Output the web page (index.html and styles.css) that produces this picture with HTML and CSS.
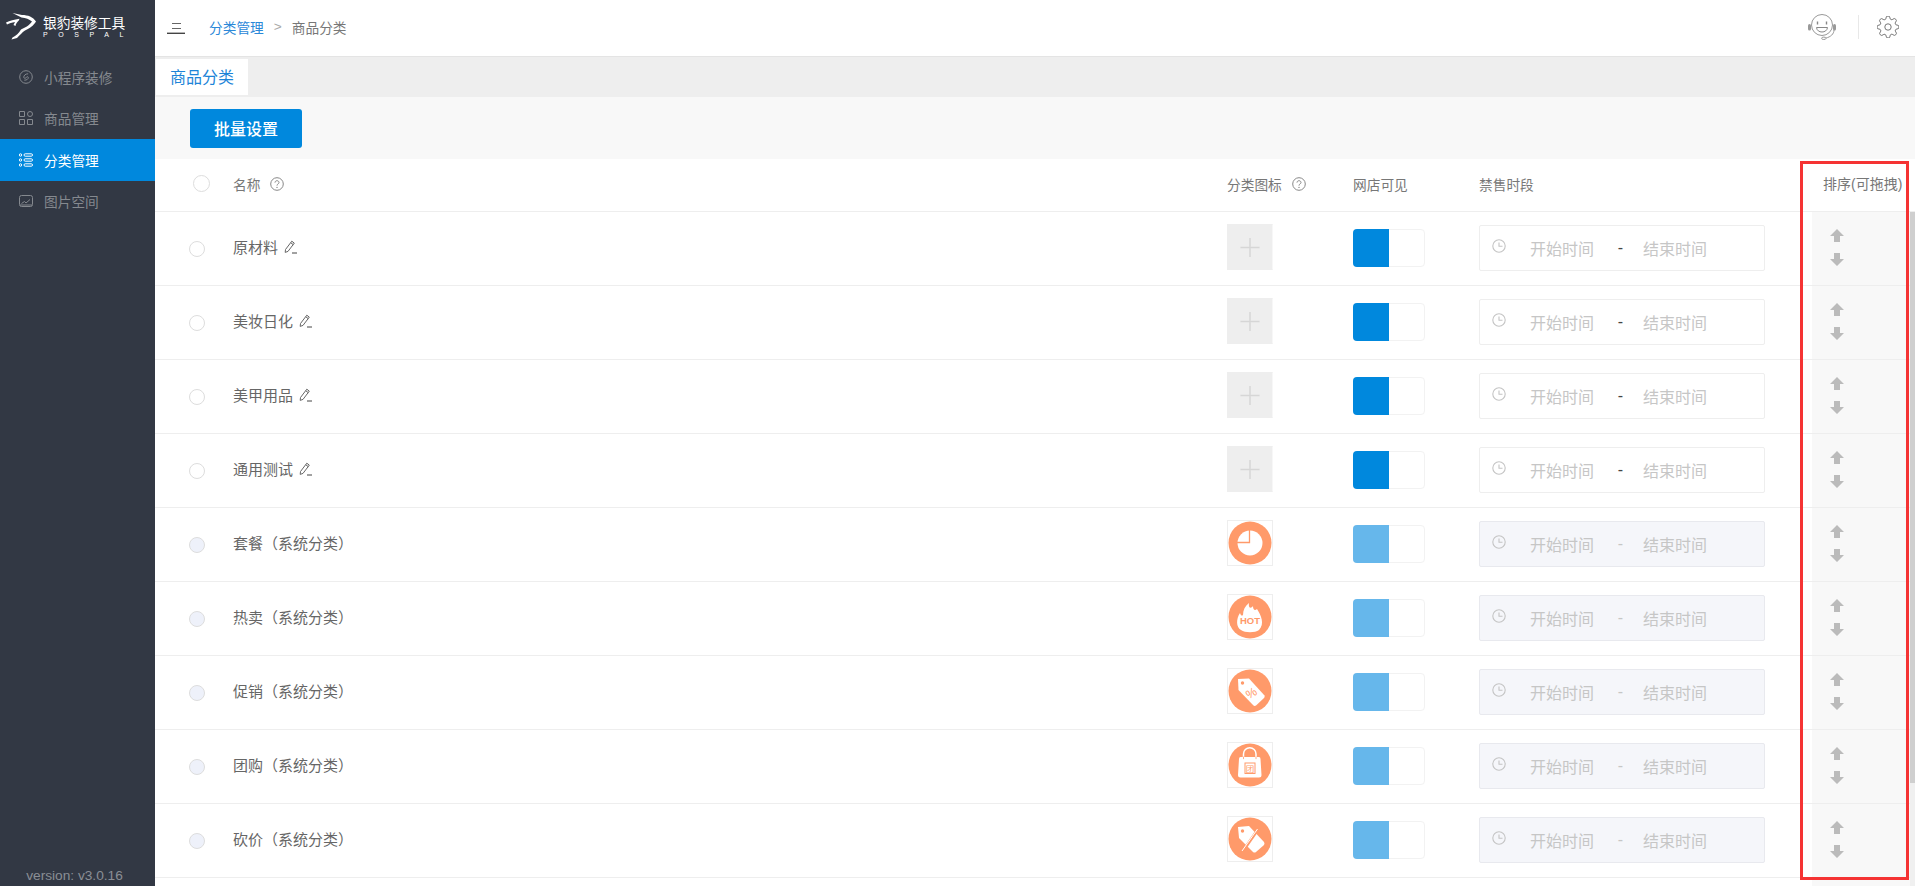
FILE: index.html
```html
<!DOCTYPE html>
<html lang="zh-CN">
<head>
<meta charset="utf-8">
<title>商品分类</title>
<link rel="stylesheet" href="styles.css">
</head>
<body>
<svg class="defs" xmlns="http://www.w3.org/2000/svg">
  <symbol id="i-q" viewBox="0 0 14 14"><circle cx="7" cy="7" r="6.300" fill="none" stroke="#888" stroke-width="1"/><path d="M5 5.600C5 4.500 5.900 3.700 7 3.700s2 .8 2 1.800C9 6.900 7 6.900 7 8.600" fill="none" stroke="#888" stroke-width="1"/><circle cx="7" cy="10.400" r=".7" fill="#888"/></symbol>
  <symbol id="i-pen" viewBox="0 0 13 14"><path d="M1.500 9.500 7.800 1.200l2.500 1.900-6.300 8.300-2.800 1z M6.800 2.800l2.500 1.900" fill="none" stroke="#666" stroke-width="1"/><path d="M8 13h5" stroke="#444" stroke-width="1"/></symbol>
  <symbol id="i-clock" viewBox="0 0 14 14"><circle cx="7" cy="7" r="6.200" fill="none" stroke="#c4c4c4" stroke-width="1.100"/><path d="M7 3.500V7.300H10.500" fill="none" stroke="#c4c4c4" stroke-width="1.100"/></symbol>
  <symbol id="i-up" viewBox="0 0 14 13"><path d="M7 0l7 7h-4v6H4V7H0z" fill="#bbb"/></symbol>
  <symbol id="i-down" viewBox="0 0 14 13"><path d="M7 13l7-7h-4V0H4v6H0z" fill="#bbb"/></symbol>
  <symbol id="i-plus" viewBox="0 0 46 46"><path d="M23 13.500v20M13 23.500h20" stroke="#d6d6d6" stroke-width="1.500" fill="none"/></symbol>
</svg>

<div class="app">
  <aside class="sidebar">
    <div class="logo">
      <svg class="logo-mark" viewBox="0 0 37 36" width="37" height="36"><path d="M12.500 5 22 7C28 7 33 9 36 13.500L35 15C32 19 28 21 25 22.500 22 24.500 20 27 17 30L11.500 31.500 12.500 29.500C16 28 19 25 21 21.500 25 19.500 29 18 32 13.500 29 11 26 10 21.500 9.500Z" fill="#fff"/><path d="M6 14.500C10 12.500 14 12 19.500 10.800L18.800 12.500C17 14 16 15.500 15.500 18L13.500 17 15 14C12 14.500 9 15.500 7 16.500Z" fill="#fff"/></svg>
      <div class="logo-text">
        <div class="logo-title">银豹装修工具</div>
        <div class="logo-sub">POSPAL</div>
      </div>
    </div>
    <nav class="menu">
      <a class="menu-item">
        <svg class="menu-icon" viewBox="0 0 14 14"><circle cx="7" cy="7" r="6.300" fill="none" stroke="currentColor"/><path d="M9.200 3.800C6.500 3.800 4.500 5.500 4.800 7.500c.2 1 2 1.200 2.400 0 .3-1 2-1.100 2.100 0 .1 1.500-1.500 2.700-4 2.700" fill="none" stroke="currentColor"/></svg>
        <span>小程序装修</span>
      </a>
      <a class="menu-item">
        <svg class="menu-icon" viewBox="0 0 14 14"><path d="M.5.500h5v5h-5zM.5 8.500h5v5h-5zM8.500 8.500h5v5h-5z" fill="none" stroke="currentColor"/><circle cx="11" cy="3" r="2.500" fill="none" stroke="currentColor"/></svg>
        <span>商品管理</span>
      </a>
      <a class="menu-item is-active">
        <svg class="menu-icon" viewBox="0 0 14 14"><g fill="none" stroke="currentColor"><circle cx="1.500" cy="2" r="1.200"/><circle cx="1.500" cy="7" r="1.200"/><circle cx="1.500" cy="12" r="1.200"/><rect x="5" y=".8" width="8.500" height="2.400" rx="1.200"/><rect x="5" y="5.800" width="8.500" height="2.400" rx="1.200"/><rect x="5" y="10.800" width="8.500" height="2.400" rx="1.200"/></g></svg>
        <span>分类管理</span>
      </a>
      <a class="menu-item">
        <svg class="menu-icon" viewBox="0 0 14 14"><rect x=".5" y="1.500" width="13" height="11" rx="2" fill="none" stroke="currentColor"/><path d="M2.500 9.500 5.500 7.500 7 9l4-3.500M1 11h12" fill="none" stroke="currentColor"/></svg>
        <span>图片空间</span>
      </a>
    </nav>
    <div class="version">version: v3.0.16</div>
  </aside>

  <main class="main">
    <header class="topbar">
      <svg class="fold" viewBox="0 0 18 11" width="18" height="11"><path d="M5 .5h9M5 5.500h9" stroke="#666" fill="none"/><path d="M0 10.300h18" stroke="#444" stroke-width="1.400" fill="none"/></svg>
      <div class="crumbs">
        <a class="crumb-link">分类管理</a>
        <span class="crumb-sep">&gt;</span>
        <span class="crumb-now">商品分类</span>
      </div>
      <div class="top-actions">
        <svg class="headset" viewBox="0 0 28 26" width="28" height="26"><circle cx="14" cy="11" r="10.500" fill="none" stroke="#999"/><path d="M26 16C26 20 22.500 23 18 24" fill="none" stroke="#999"/><ellipse cx="15.800" cy="24.300" rx="2.200" ry="1.200" fill="none" stroke="#999"/><rect x="0" y="10" width="3" height="6.500" rx="1.500" fill="#999"/><rect x="25" y="10" width="3" height="6.500" rx="1.500" fill="#999"/><path d="M9.500 7.500v3M18.500 7.500v3" stroke="#888" stroke-width="1.400"/><path d="M8.500 13.500h11c-.3 3-2.800 4.500-5.500 4.500s-5.200-1.500-5.500-4.500z" fill="none" stroke="#888"/></svg>
        <span class="top-divider"></span>
        <svg class="gear" viewBox="1 1 22 22" width="22" height="22"><circle cx="12" cy="12" r="3.200" fill="none" stroke="#777" stroke-width="1"/><path d="M19.400 15a1.650 1.650 0 0 0 .33 1.820l.06.06a2 2 0 0 1 0 2.830 2 2 0 0 1-2.830 0l-.06-.06a1.650 1.650 0 0 0-1.820-.33 1.650 1.650 0 0 0-1 1.510V21a2 2 0 0 1-2 2 2 2 0 0 1-2-2v-.09A1.650 1.650 0 0 0 9 19.400a1.650 1.650 0 0 0-1.820.33l-.06.06a2 2 0 0 1-2.830 0 2 2 0 0 1 0-2.830l.06-.06a1.650 1.650 0 0 0 .33-1.820 1.650 1.650 0 0 0-1.510-1H3a2 2 0 0 1-2-2 2 2 0 0 1 2-2h.09A1.650 1.650 0 0 0 4.600 9a1.650 1.650 0 0 0-.33-1.820l-.06-.06a2 2 0 0 1 0-2.830 2 2 0 0 1 2.830 0l.06.06a1.650 1.650 0 0 0 1.820.33H9a1.650 1.650 0 0 0 1-1.510V3a2 2 0 0 1 2-2 2 2 0 0 1 2 2v.09a1.650 1.650 0 0 0 1 1.510 1.650 1.650 0 0 0 1.820-.33l.06-.06a2 2 0 0 1 2.830 0 2 2 0 0 1 0 2.830l-.06.06a1.650 1.650 0 0 0-.33 1.820V9a1.650 1.650 0 0 0 1.510 1H21a2 2 0 0 1 2 2 2 2 0 0 1-2 2h-.09a1.650 1.650 0 0 0-1.510 1z" fill="none" stroke="#777" stroke-width="1"/></svg>
      </div>
    </header>

    <div class="tabs"><div class="tab">商品分类</div></div>
    <div class="toolbar"><button class="btn-primary" type="button">批量设置</button></div>

    <section class="table">
      <div class="cols table-head">
        <div class="cell-name"><span class="radio radio-head"></span><span>名称</span><svg class="q"><use href="#i-q"/></svg></div>
        <div class="cell-head"><span>分类图标</span><svg class="q"><use href="#i-q"/></svg></div>
        <div>网店可见</div>
        <div>禁售时段</div>
        <div class="head-sort">排序<span class="paren">(</span>可拖拽<span class="paren">)</span></div>
      </div>

      <div class="table-body">
        <div class="rows">
          <div class="cols row">
            <div class="cell-name"><span class="radio"></span><span class="name">原材料</span><svg class="pen"><use href="#i-pen"/></svg></div>
            <div><div class="pic pic-empty"><svg class="plus"><use href="#i-plus"/></svg></div></div>
            <div><div class="switch"><span class="switch-on"></span></div></div>
            <div><div class="time"><svg class="clock"><use href="#i-clock"/></svg><span>开始时间</span><span class="dash">-</span><span>结束时间</span></div></div>
            <div class="sort"><svg class="arrow"><use href="#i-up"/></svg><svg class="arrow"><use href="#i-down"/></svg></div>
          </div>
          <div class="cols row">
            <div class="cell-name"><span class="radio"></span><span class="name">美妆日化</span><svg class="pen"><use href="#i-pen"/></svg></div>
            <div><div class="pic pic-empty"><svg class="plus"><use href="#i-plus"/></svg></div></div>
            <div><div class="switch"><span class="switch-on"></span></div></div>
            <div><div class="time"><svg class="clock"><use href="#i-clock"/></svg><span>开始时间</span><span class="dash">-</span><span>结束时间</span></div></div>
            <div class="sort"><svg class="arrow"><use href="#i-up"/></svg><svg class="arrow"><use href="#i-down"/></svg></div>
          </div>
          <div class="cols row">
            <div class="cell-name"><span class="radio"></span><span class="name">美甲用品</span><svg class="pen"><use href="#i-pen"/></svg></div>
            <div><div class="pic pic-empty"><svg class="plus"><use href="#i-plus"/></svg></div></div>
            <div><div class="switch"><span class="switch-on"></span></div></div>
            <div><div class="time"><svg class="clock"><use href="#i-clock"/></svg><span>开始时间</span><span class="dash">-</span><span>结束时间</span></div></div>
            <div class="sort"><svg class="arrow"><use href="#i-up"/></svg><svg class="arrow"><use href="#i-down"/></svg></div>
          </div>
          <div class="cols row">
            <div class="cell-name"><span class="radio"></span><span class="name">通用测试</span><svg class="pen"><use href="#i-pen"/></svg></div>
            <div><div class="pic pic-empty"><svg class="plus"><use href="#i-plus"/></svg></div></div>
            <div><div class="switch"><span class="switch-on"></span></div></div>
            <div><div class="time"><svg class="clock"><use href="#i-clock"/></svg><span>开始时间</span><span class="dash">-</span><span>结束时间</span></div></div>
            <div class="sort"><svg class="arrow"><use href="#i-up"/></svg><svg class="arrow"><use href="#i-down"/></svg></div>
          </div>

          <div class="cols row is-system">
            <div class="cell-name"><span class="radio"></span><span class="name">套餐（系统分类）</span></div>
            <div><div class="pic"><svg class="badge" viewBox="0 0 44 44"><circle cx="22" cy="22" r="21.500" fill="#ff9a6a"/><circle cx="22" cy="22" r="12.500" fill="#fff"/><path d="M21.500 8v13.500H8" fill="none" stroke="#ff9a6a" stroke-width="1.300"/></svg></div></div>
            <div><div class="switch"><span class="switch-on"></span></div></div>
            <div><div class="time"><svg class="clock"><use href="#i-clock"/></svg><span>开始时间</span><span class="dash">-</span><span>结束时间</span></div></div>
            <div class="sort"><svg class="arrow"><use href="#i-up"/></svg><svg class="arrow"><use href="#i-down"/></svg></div>
          </div>
          <div class="cols row is-system">
            <div class="cell-name"><span class="radio"></span><span class="name">热卖（系统分类）</span></div>
            <div><div class="pic"><svg class="badge" viewBox="0 0 44 44"><circle cx="22" cy="22" r="21.500" fill="#ff9a6a"/><path d="M13 35C8 32 8 24 12 18 13 21 14 21 15 20 15 15 17 11 21 8 20 13 23 14 25 11 25 15 27 16 29 14 33 20 37 29 31 35 27 38 17 38 13 35Z" fill="#fff"/><text class="badge-hot" x="22" y="29" text-anchor="middle">HOT</text></svg></div></div>
            <div><div class="switch"><span class="switch-on"></span></div></div>
            <div><div class="time"><svg class="clock"><use href="#i-clock"/></svg><span>开始时间</span><span class="dash">-</span><span>结束时间</span></div></div>
            <div class="sort"><svg class="arrow"><use href="#i-up"/></svg><svg class="arrow"><use href="#i-down"/></svg></div>
          </div>
          <div class="cols row is-system">
            <div class="cell-name"><span class="radio"></span><span class="name">促销（系统分类）</span></div>
            <div><div class="pic"><svg class="badge" viewBox="0 0 44 44"><circle cx="22" cy="22" r="21.500" fill="#ff9a6a"/><path d="M10 10 21 9.500 36.500 26.500Q37 28 36 29L28 36.500Q26.500 37.500 25 36L10.500 21Z" fill="#fff"/><circle cx="14.500" cy="14" r="1.700" fill="#ff9a6a"/><text class="badge-pct" x="23.500" y="28" text-anchor="middle" transform="rotate(-30 23.500 24)">%</text></svg></div></div>
            <div><div class="switch"><span class="switch-on"></span></div></div>
            <div><div class="time"><svg class="clock"><use href="#i-clock"/></svg><span>开始时间</span><span class="dash">-</span><span>结束时间</span></div></div>
            <div class="sort"><svg class="arrow"><use href="#i-up"/></svg><svg class="arrow"><use href="#i-down"/></svg></div>
          </div>
          <div class="cols row is-system">
            <div class="cell-name"><span class="radio"></span><span class="name">团购（系统分类）</span></div>
            <div><div class="pic"><svg class="badge" viewBox="0 0 44 44"><circle cx="22" cy="22" r="21.500" fill="#ff9a6a"/><path d="M12.500 14H31Q32.500 14 32.500 16L33.500 32Q33.500 34.500 31 34.500H12.500Q10 34.500 10 32L11 16Q11 14 12.500 14Z" fill="#fff"/><path d="M15.500 16.500V11A6.200 6.200 0 0 1 28 11V16.500" fill="none" stroke="#fff" stroke-width="1.500"/><path d="M15.500 13.600v2.500M28 13.600v2.500" stroke="#ff9a6a" stroke-width=".8"/><rect x="17" y="20" width="10" height="10.500" fill="none" stroke="#ff9a6a" stroke-width="1"/><text class="badge-tuan" x="22" y="28.500" text-anchor="middle">团</text></svg></div></div>
            <div><div class="switch"><span class="switch-on"></span></div></div>
            <div><div class="time"><svg class="clock"><use href="#i-clock"/></svg><span>开始时间</span><span class="dash">-</span><span>结束时间</span></div></div>
            <div class="sort"><svg class="arrow"><use href="#i-up"/></svg><svg class="arrow"><use href="#i-down"/></svg></div>
          </div>
          <div class="cols row is-system">
            <div class="cell-name"><span class="radio"></span><span class="name">砍价（系统分类）</span></div>
            <div><div class="pic"><svg class="badge" viewBox="0 0 44 44"><circle cx="22" cy="22" r="21.500" fill="#ff9a6a"/><path d="M10 10 21 9 36 25Q37 26.500 36 28L28 35Q26.500 36 25 35L11 21Z" fill="#fff"/><circle cx="14.500" cy="14" r="1.700" fill="#ff9a6a"/><path d="M31 11 15 34" stroke="#ff9a6a" stroke-width="3"/><path d="M29.500 12 14 34" stroke="#fff" stroke-width="1"/></svg></div></div>
            <div><div class="switch"><span class="switch-on"></span></div></div>
            <div><div class="time"><svg class="clock"><use href="#i-clock"/></svg><span>开始时间</span><span class="dash">-</span><span>结束时间</span></div></div>
            <div class="sort"><svg class="arrow"><use href="#i-up"/></svg><svg class="arrow"><use href="#i-down"/></svg></div>
          </div>
          <div class="cols row row-more">
            <div></div><div></div><div></div><div></div><div class="sort"></div>
          </div>
        </div>
        <div class="scrollbar"><div class="scroll-thumb"></div></div>
      </div>
      <div class="highlight"></div>
    </section>
  </main>
</div>
</body>
</html>
```

FILE: styles.css
```css
* { box-sizing: border-box; }
html, body { margin: 0; height: 100%; overflow: hidden; }
body {
  font-family: "Noto Sans CJK SC", "Liberation Sans", sans-serif;
  font-size: 14px;
  color: #666;
  background: #fff;
}
.defs { display: none; }

.app { display: flex; height: 100vh; }

/* sidebar */
.sidebar {
  width: 155px;
  flex: none;
  display: flex;
  flex-direction: column;
  background: #323844;
  color: #85898f;
}
.logo { display: flex; height: 56px; padding-top: 8px; }
.logo-mark { flex: none; }
.logo-text { margin: 6px 0 0 6px; }
.logo-title { font-size: 13.700px; line-height: 16px; color: #fff; white-space: nowrap; }
.logo-sub {
  font-family: "Liberation Sans", sans-serif;
  font-size: 7px;
  line-height: 10px;
  letter-spacing: 10.600px;
  color: #fff;
  white-space: nowrap;
}
.menu { flex: 1; }
.menu-item {
  display: flex;
  align-items: center;
  height: 41.500px;
  padding-left: 19px;
  font-size: 13.700px;
  white-space: nowrap;
}
.menu-item.is-active { background: #0088dd; color: #fff; }
.menu-icon { width: 14px; height: 14px; margin-right: 11px; flex: none; }
.version {
  font-family: "Liberation Sans", sans-serif;
  font-size: 13.700px;
  line-height: 16px;
  text-align: center;
  padding: 0 6px 2px 0;
  color: #8a8e95;
}

/* main */
.main { flex: 1; min-width: 0; display: flex; flex-direction: column; }

.topbar {
  height: 57px;
  flex: none;
  display: flex;
  align-items: center;
  padding: 0 16px 2px 12px;
  border-bottom: 1px solid #e4e4e4;
}
.fold { flex: none; margin-top: 3px; }
.crumbs { display: flex; align-items: center; margin-left: 24px; font-size: 13.700px; line-height: 20px; }
.crumb-link { color: #2b88d8; }
.crumb-sep { margin: 0 10px; color: #aaa; font-family: "Liberation Sans", sans-serif; }
.crumb-now { color: #777; }
.top-actions { margin-left: auto; display: flex; align-items: center; }
.top-divider { width: 1px; height: 24px; margin: 0 18px 0 22px; background: #e8e8e8; }

.tabs { height: 40px; flex: none; padding: 2px 0 0 1px; background: #eee; }
.tab {
  width: 92px;
  height: 36px;
  background: #fff;
  color: #1d84d8;
  font-size: 16px;
  line-height: 35px;
  text-align: center;
}

.toolbar { height: 62px; flex: none; padding: 12px 35px; background: #f8f8f8; }
.btn-primary {
  display: block;
  width: 112px;
  height: 39px;
  padding: 0;
  border: 0;
  border-radius: 3px;
  background: #0088dd;
  color: #fff;
  font: 500 16px/37px "Noto Sans CJK SC", sans-serif;
}

/* table */
.table { flex: 1; min-height: 0; display: flex; flex-direction: column; position: relative; }
.cols {
  display: grid;
  grid-template-columns: 1072px 126px 126px 333px 98px;
  align-items: center;
}
.table-head {
  height: 53px;
  flex: none;
  padding-bottom: 3px;
  border-bottom: 1px solid #eee;
  font-size: 13.700px;
  line-height: 20px;
  color: #777;
  grid-template-columns: 1072px 126px 126px 333px 103px;
}
.cell-name { display: flex; align-items: center; padding-left: 34px; }
.table-head .cell-name { padding-left: 38px; }
.radio {
  width: 16px;
  height: 16px;
  flex: none;
  margin-right: 28px;
  border: 1px solid #ddd;
  border-radius: 50%;
  background: #fff;
}
.row .radio { margin-top: 2px; }
.is-system .radio { background: #eef1fa; }
.radio-head { width: 17px; height: 17px; margin-right: 23px; }
.q { width: 14px; height: 14px; margin-left: 10px; flex: none; }
.cell-head { display: flex; align-items: center; }
.head-sort { white-space: nowrap; padding-left: 11px; font-size: 14px; }
.paren { font-family: "Liberation Sans", sans-serif; }

.table-body { flex: 1; min-height: 0; display: flex; }
.rows { flex: 1; min-width: 0; overflow: hidden; }
.row { height: 74px; padding-bottom: 1px; border-bottom: 1px solid #eee; color: #666; }
.name { font-size: 15px; line-height: 20px; white-space: nowrap; margin-top: -2px; }
.pen { width: 13px; height: 14px; margin-left: 6px; flex: none; margin-top: -3px; }

.pic {
  width: 46px;
  height: 46px;
  margin-top: -2px;
  border: 1px solid #eee;
  display: flex;
  align-items: center;
  justify-content: center;
}
.pic-empty { background: #eee; border-right-color: #f7f7f7; }
.plus { width: 44px; height: 44px; }
.badge { width: 44px; height: 44px; display: block; }
.badge-hot { font: 700 9.500px "Liberation Sans", sans-serif; fill: #ff9a6a; }
.badge-pct { font: 400 12px "Liberation Sans", sans-serif; fill: #ff9a6a; }
.badge-tuan { font: 400 8.500px "Noto Sans CJK SC", sans-serif; fill: #ff9a6a; }

.switch {
  width: 72px;
  height: 38px;
  border: 1px solid #f2f2f2;
  border-radius: 4px;
  background: #fff;
}
.switch-on {
  display: block;
  width: 36px;
  height: 38px;
  margin: -1px 0 0 -1px;
  border-radius: 4px 0 0 4px;
  background: #0088dd;
}
.is-system .switch-on { background: #66b7eb; }

.time {
  width: 286px;
  height: 46px;
  display: flex;
  align-items: center;
  padding-left: 12px;
  border: 1px solid #eee;
  border-radius: 2px;
  background: #fff;
  color: #c6c6c6;
  font-size: 16px;
  line-height: 22px;
  white-space: nowrap;
}
.is-system .time { background: #f5f6fa; border-color: #e8e9ee; }
.clock { width: 14px; height: 14px; margin-right: 24px; margin-top: -4px; flex: none; }
.dash { width: 49px; padding-left: 4px; text-align: center; color: #444; font-family: "Liberation Sans", sans-serif; }
.is-system .dash { color: #c6c6c6; }

.sort {
  align-self: stretch;
  display: flex;
  flex-direction: column;
  align-items: flex-start;
  margin-bottom: -1px;
  padding: 17px 0 0 18px;
  background: #f8f8f8;
}
.arrow { width: 14px; height: 13px; margin-bottom: 11px; flex: none; }

.scrollbar { width: 5px; flex: none; background: #f0f0f0; }
.scroll-thumb { height: 571px; background: #cfcfcf; }

.highlight {
  position: absolute;
  top: 2px;
  right: 6px;
  bottom: 6px;
  width: 109px;
  border: 3px solid #f53333;
  pointer-events: none;
}
```
